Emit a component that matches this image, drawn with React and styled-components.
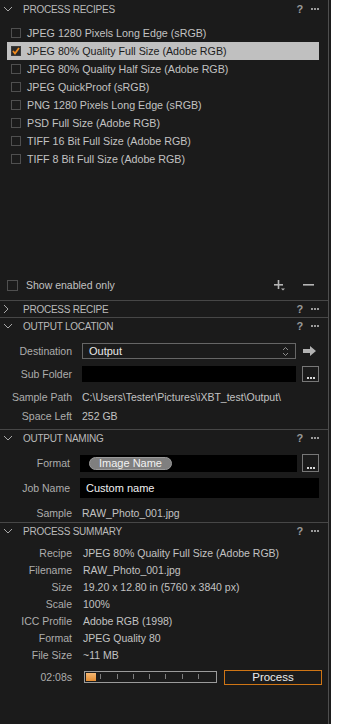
import React from 'react';
import styled, { createGlobalStyle } from 'styled-components';

// global
const Global = createGlobalStyle`
  html, body {
    margin: 0;
    padding: 0;
    background: #ffffff;
  }
  body {
    font-family: "Liberation Sans", Arial, sans-serif;
    font-size: 10.5px;
  }
`;

// layout
const Shell = styled.div`
  width: 331px;
  height: 724px;
  background: #1b1b1b;
  display: flex;
`;

const Panel = styled.div`
  width: 328px;
  border-right: 1px solid #4e4e4e;
  display: flex;
  flex-direction: column;
  color: #c2c2c2;
`;

const RecipesSection = styled.div`
  height: 300px;
  display: flex;
  flex-direction: column;
`;

const Header = styled.div`
  height: ${p => (p.$first ? '18px' : '16px')};
  border-top: ${p => (p.$first ? 'none' : '1px solid #474747')};
  display: flex;
  align-items: center;
  padding: 0 9px 0 3px;
  color: #bababa;
  font-size: 10px;
  letter-spacing: -0.25px;
`;

const Chevron = styled.span`
  width: 20px;
  display: flex;
  align-items: center;
`;

const HeaderTitle = styled.span`
  flex: 1;
`;

const Help = styled.span`
  font-weight: bold;
  color: #9a9a9a;
  font-size: 11px;
  margin-right: 8px;
`;

// recipe list
const RecipeList = styled.div`
  margin-top: 6px;
  padding: 0 9px 0 7px;
  display: flex;
  flex-direction: column;
  font-size: 10.7px;
`;

const RecipeRow = styled.div`
  height: 18px;
  display: flex;
  align-items: center;
  padding-left: 4px;
  gap: 6px;
  background: ${p => (p.$selected ? '#c0c0c0' : 'transparent')};
  color: ${p => (p.$selected ? '#1b1b1b' : '#c2c2c2')};
`;

const Box = styled.span`
  width: ${p => p.$size || 10}px;
  height: ${p => p.$size || 10}px;
  border: 1px solid ${p => (p.$checked ? '#3a3a3a' : '#4f4f4f')};
  background: ${p => (p.$checked ? '#2a2a2a' : '#1b1b1b')};
  box-sizing: border-box;
  display: flex;
  align-items: center;
  justify-content: center;
  flex-shrink: 0;
`;

const Spacer = styled.div`
  flex: 1;
`;

const ListFooter = styled.div`
  height: 16px;
  margin-bottom: 7px;
  display: flex;
  align-items: center;
  padding: 0 14px 0 7px;
  gap: 8px;
`;

const FooterTools = styled.div`
  display: flex;
  align-items: center;
  gap: 17px;
`;

// form rows
const Body = styled.div`
  display: flex;
  flex-direction: column;
  padding: ${p => p.$pad || '0'};
`;

const FieldRow = styled.div`
  height: ${p => p.$h || 16}px;
  margin-top: ${p => p.$mt || 0}px;
  display: flex;
  align-items: center;
  padding-right: ${p => p.$pr || 9}px;
`;

const Label = styled.span`
  width: ${p => p.$w || 72}px;
  text-align: right;
  color: #adadad;
  flex-shrink: 0;
  margin-right: ${p => p.$gap || 10}px;
  white-space: nowrap;
`;

const Value = styled.span`
  color: #c2c2c2;
  white-space: nowrap;
`;

const Select = styled.div`
  width: 214px;
  height: 16px;
  box-sizing: border-box;
  border: 1px solid #666666;
  display: flex;
  align-items: center;
  justify-content: space-between;
  padding: 0 6px;
  color: #e8e8e8;
  font-size: 11px;
`;

const BlackField = styled.div`
  width: ${p => p.$w}px;
  height: ${p => p.$h || 16}px;
  background: #000000;
  display: flex;
  align-items: center;
  padding-left: ${p => p.$pl || 0}px;
  box-sizing: border-box;
  color: #f0f0f0;
  font-size: 11px;
`;

const DotsButton = styled.div`
  width: 17px;
  height: ${p => p.$h || 16}px;
  margin-left: auto;
  box-sizing: border-box;
  border: 1px solid #777777;
  display: flex;
  align-items: flex-end;
  justify-content: center;
  padding-bottom: 2px;
`;

const Pill = styled.span`
  height: 13px;
  padding: 0 9px;
  border-radius: 7px;
  background: #7f7f7f;
  border: 1px solid #9a9a9a;
  box-sizing: border-box;
  display: flex;
  align-items: center;
  color: #f2f2f2;
  font-size: 11px;
`;

const ArrowSlot = styled.span`
  margin-left: auto;
  margin-right: 3px;
  display: flex;
`;

// progress
const ProgressBar = styled.div`
  width: 133px;
  height: 12px;
  border: 1px solid #9b9b9b;
  box-sizing: border-box;
  position: relative;
  display: flex;
  align-items: center;
  padding-left: 1px;
`;

const ProgressFill = styled.span`
  width: 10px;
  height: 8px;
  background: linear-gradient(#f6b873, #e38d34);
`;

const ProcessButton = styled.div`
  margin-left: auto;
  width: 98px;
  height: 15px;
  box-sizing: border-box;
  border: 1px solid #cf7515;
  display: flex;
  align-items: center;
  justify-content: center;
  color: #ececec;
  font-size: 11.5px;
`;

// icons
const ChevronDown = () => (
  <svg width="10" height="6" viewBox="0 0 10 6">
    <polyline points="1,1 5,5 9,1" fill="none" stroke="#a8a8a8" strokeWidth="1" />
  </svg>
);

const ChevronRight = () => (
  <svg width="6" height="10" viewBox="0 0 6 10">
    <polyline points="1,1 5,5 1,9" fill="none" stroke="#a8a8a8" strokeWidth="1" />
  </svg>
);

const Dots = ({ color = '#9a9a9a' }) => (
  <svg width="8" height="2" viewBox="0 0 8 2">
    <rect x="0" y="0" width="2" height="2" fill={color} />
    <rect x="3" y="0" width="2" height="2" fill={color} />
    <rect x="6" y="0" width="2" height="2" fill={color} />
  </svg>
);

const Check = () => (
  <svg width="8" height="8" viewBox="0 0 8 8">
    <polyline points="1,4 3,6.5 7,1" fill="none" stroke="#f08a1c" strokeWidth="1.8" />
  </svg>
);

const PlusIcon = () => (
  <svg width="12" height="11" viewBox="0 0 12 11">
    <rect x="0" y="4" width="9" height="1.6" fill="#b5b5b5" />
    <rect x="3.7" y="0" width="1.6" height="9" fill="#b5b5b5" />
    <polygon points="7,8.5 11,8.5 9,10.5" fill="#b5b5b5" />
  </svg>
);

const MinusIcon = () => (
  <svg width="11" height="2" viewBox="0 0 11 2">
    <rect x="0" y="0" width="11" height="1.6" fill="#b5b5b5" />
  </svg>
);

const UpDown = () => (
  <svg width="7" height="11" viewBox="0 0 7 11">
    <polyline points="1,4 3.5,1.5 6,4" fill="none" stroke="#9a9a9a" strokeWidth="0.9" />
    <polyline points="1,7 3.5,9.5 6,7" fill="none" stroke="#9a9a9a" strokeWidth="0.9" />
  </svg>
);

const ArrowRight = () => (
  <svg width="13" height="10" viewBox="0 0 13 10">
    <polygon points="0,3 7,3 7,0 13,5 7,10 7,7 0,7" fill="#b2b2b2" />
  </svg>
);

const Ticks = () => (
  <svg width="131" height="10" viewBox="0 0 131 10" style={{ position: 'absolute', left: 0, top: 0 }}>
    {[15, 32, 48, 64, 80, 97, 113].map(x => (
      <rect key={x} x={x} y="2" width="1" height="5" fill="#7d7d7d" />
    ))}
  </svg>
);

const SectionHeader = ({ title, collapsed, first }) => (
  <Header $first={first}>
    <Chevron>{collapsed ? <ChevronRight /> : <ChevronDown />}</Chevron>
    <HeaderTitle>{title}</HeaderTitle>
    <Help>?</Help>
    <Dots />
  </Header>
);

const recipes = [
  'JPEG 1280 Pixels Long Edge (sRGB)',
  'JPEG 80% Quality Full Size (Adobe RGB)',
  'JPEG 80% Quality Half Size (Adobe RGB)',
  'JPEG QuickProof (sRGB)',
  'PNG 1280 Pixels Long Edge (sRGB)',
  'PSD Full Size (Adobe RGB)',
  'TIFF 16 Bit Full Size (Adobe RGB)',
  'TIFF 8 Bit Full Size (Adobe RGB)',
];

const summary = [
  ['Recipe', 'JPEG 80% Quality Full Size (Adobe RGB)'],
  ['Filename', 'RAW_Photo_001.jpg'],
  ['Size', '19.20 x 12.80 in (5760 x 3840 px)'],
  ['Scale', '100%'],
  ['ICC Profile', 'Adobe RGB (1998)'],
  ['Format', 'JPEG Quality 80'],
  ['File Size', '~11 MB'],
];

export default function App() {
  return (
    <>
      <Global />
      <Shell>
        <Panel>
          <RecipesSection>
            <SectionHeader title="PROCESS RECIPES" first />
            <RecipeList>
              {recipes.map((r, i) => (
                <RecipeRow key={r} $selected={i === 1}>
                  <Box $checked={i === 1}>{i === 1 && <Check />}</Box>
                  {r}
                </RecipeRow>
              ))}
            </RecipeList>
            <Spacer />
            <ListFooter>
              <Box $size={11} />
              <Spacer>Show enabled only</Spacer>
              <FooterTools>
                <PlusIcon />
                <MinusIcon />
              </FooterTools>
            </ListFooter>
          </RecipesSection>

          <SectionHeader title="PROCESS RECIPE" collapsed />

          <SectionHeader title="OUTPUT LOCATION" />
          <Body $pad="9px 0 4px 0">
            <FieldRow>
              <Label>Destination</Label>
              <Select>
                Output
                <UpDown />
              </Select>
              <ArrowSlot>
                <ArrowRight />
              </ArrowSlot>
            </FieldRow>
            <FieldRow $mt={7}>
              <Label>Sub Folder</Label>
              <BlackField $w={214} />
              <DotsButton>
                <Dots color="#d8d8d8" />
              </DotsButton>
            </FieldRow>
            <FieldRow $h={19} $mt={5}>
              <Label>Sample Path</Label>
              <Value>C:\Users\Tester\Pictures\iXBT_test\Output\</Value>
            </FieldRow>
            <FieldRow $h={19}>
              <Label>Space Left</Label>
              <Value>252 GB</Value>
            </FieldRow>
          </Body>

          <SectionHeader title="OUTPUT NAMING" />
          <Body $pad="8px 0 0 0">
            <FieldRow $h={18}>
              <Label $w={70}>Format</Label>
              <BlackField $w={217} $h={17} $pl={9}>
                <Pill>Image Name</Pill>
              </BlackField>
              <DotsButton $h={18}>
                <Dots color="#d8d8d8" />
              </DotsButton>
            </FieldRow>
            <FieldRow $h={20} $mt={6}>
              <Label $w={70}>Job Name</Label>
              <BlackField $w={240} $h={20} $pl={6}>
                Custom name
              </BlackField>
            </FieldRow>
            <FieldRow $h={19} $mt={5}>
              <Label $w={72} $gap={10}>Sample</Label>
              <Value>RAW_Photo_001.jpg</Value>
            </FieldRow>
          </Body>

          <SectionHeader title="PROCESS SUMMARY" />
          <Body $pad="5px 0 0 0">
            {summary.map(([k, v]) => (
              <FieldRow key={k} $h={17}>
                <Label $gap={11}>{k}</Label>
                <Value>{v}</Value>
              </FieldRow>
            ))}
            <FieldRow $h={16} $mt={6} $pr={6}>
              <Label $gap={12}>02:08s</Label>
              <ProgressBar>
                <ProgressFill />
                <Ticks />
              </ProgressBar>
              <ProcessButton>Process</ProcessButton>
            </FieldRow>
          </Body>
        </Panel>
      </Shell>
    </>
  );
}
